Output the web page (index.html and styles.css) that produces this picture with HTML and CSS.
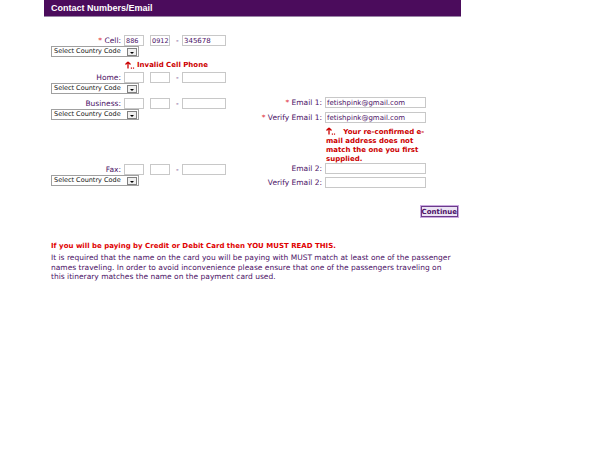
FILE: index.html
```html
<!DOCTYPE html>
<html lang="en">
<head>
    <meta charset="UTF-8">
    <title>Contact Numbers/Email</title>
    <link rel="stylesheet" href="styles.css">
</head>
<body>
    <div class="panel">
        <div class="panel-title">Contact Numbers/Email</div>

        <form class="contact-form">
            <div class="col-left">
                <!-- Cell -->
                <div class="phone-group">
                    <div class="field">
                        <label><span class="req">*</span> Cell:</label>
                        <input type="text" class="in-cc" value="886">
                        <input type="text" class="in-area" value="0912">
                        <span class="dash">-</span>
                        <input type="text" class="in-num" value="345678">
                    </div>
                    <div class="fake-select">Select Country Code<span class="arrow"></span></div>
                </div>
                <div class="error error-phone"><svg class="err-icon" width="10" height="8" viewBox="0 0 10 8"><path d="M3 1 L0.5 3.5 M3 1 L5.5 3.5 M3 1 V7.5" stroke="#c00" stroke-width="1.3" fill="none"/><rect x="5.8" y="6.5" width="1.2" height="1.2" fill="#c00"/><rect x="7.9" y="6.5" width="1.2" height="1.2" fill="#c00"/></svg><span>Invalid Cell Phone</span></div>

                <!-- Home -->
                <div class="phone-group">
                    <div class="field">
                        <label>Home:</label>
                        <input type="text" class="in-cc">
                        <input type="text" class="in-area">
                        <span class="dash">-</span>
                        <input type="text" class="in-num">
                    </div>
                    <div class="fake-select">Select Country Code<span class="arrow"></span></div>
                </div>

                <!-- Business -->
                <div class="phone-group group-business">
                    <div class="field">
                        <label>Business:</label>
                        <input type="text" class="in-cc">
                        <input type="text" class="in-area">
                        <span class="dash">-</span>
                        <input type="text" class="in-num">
                    </div>
                    <div class="fake-select">Select Country Code<span class="arrow"></span></div>
                </div>

                <!-- Fax -->
                <div class="phone-group group-fax">
                    <div class="field">
                        <label>Fax:</label>
                        <input type="text" class="in-cc">
                        <input type="text" class="in-area">
                        <span class="dash">-</span>
                        <input type="text" class="in-num">
                    </div>
                    <div class="fake-select">Select Country Code<span class="arrow"></span></div>
                </div>
            </div>

            <div class="col-right">
                <div class="field email-field">
                    <label><span class="req">*</span> Email 1:</label>
                    <input type="text" class="in-email" value="fetishpink@gmail.com">
                </div>
                <div class="field email-field">
                    <label><span class="req">*</span> Verify Email 1:</label>
                    <input type="text" class="in-email" value="fetishpink@gmail.com">
                </div>
                <div class="error error-email"><svg class="err-icon" width="10" height="8" viewBox="0 0 10 8"><path d="M3 1 L0.5 3.5 M3 1 L5.5 3.5 M3 1 V7.5" stroke="#c00" stroke-width="1.3" fill="none"/><rect x="5.8" y="6.5" width="1.2" height="1.2" fill="#c00"/><rect x="7.9" y="6.5" width="1.2" height="1.2" fill="#c00"/></svg>&nbsp;&nbsp; Your re-confirmed e-mail address does not match the one you first supplied.</div>
                <div class="field email-field">
                    <label>Email 2:</label>
                    <input type="text" class="in-email">
                </div>
                <div class="field email-field">
                    <label>Verify Email 2:</label>
                    <input type="text" class="in-email">
                </div>
            </div>
        </form>

        <div class="actions">
            <button type="button" class="btn-continue">Continue</button>
        </div>

        <div class="notice">
            <p class="notice-title">If you will be paying by Credit or Debit Card then YOU MUST READ THIS.</p>
            <p class="notice-text">It is required that the name on the card you will be paying with MUST match at least one of the passenger names traveling. In order to avoid inconvenience please ensure that one of the passengers traveling on this itinerary matches the name on the payment card used.</p>
        </div>
    </div>
</body>
</html>
```

FILE: styles.css
```css
body {
    margin: 0;
    padding: 0;
    background-color: #fff;
    font-family: "DejaVu Sans", Verdana, sans-serif;
    font-size: 7.5px;
    color: #4b1166;
}

.panel {
    width: 417px;
    margin-left: 44px;
}

.panel-title {
    height: 16px;
    line-height: 16px;
    padding-left: 7px;
    background-color: #4b0c5c;
    border-bottom: 1px solid #9a86a6;
    color: #fff;
    font-family: "Liberation Sans", Arial, sans-serif;
    font-weight: bold;
    font-size: 9px;
}

/* Formulir */
.contact-form {
    display: grid;
    grid-template-columns: 189px 220px;
    align-items: start;
    margin-top: 18px;
    padding-left: 7px;
}

.field {
    display: flex;
    align-items: center;
    height: 11px;
}

.field label {
    width: 70px;
    margin-right: 3px;
    text-align: right;
    white-space: nowrap;
}

.req {
    color: #e0303a;
}

.field input {
    box-sizing: border-box;
    height: 11px;
    margin: 0;
    padding: 0 0 0 1px;
    border: 1px solid #c8c8c8;
    font-family: inherit;
    font-size: 7px;
    color: #4b1166;
    background: #fff;
}

.field .in-cc,
.field .in-area {
    width: 20px;
    margin-right: 6px;
    font-size: 6.5px;
}

.dash {
    width: 6px;
}

.in-num {
    width: 44px;
}

.fake-select {
    position: relative;
    box-sizing: border-box;
    width: 88px;
    height: 11px;
    padding-left: 2px;
    border: 1px solid #a0a0a0;
    font-size: 6.5px;
    line-height: 9px;
    color: #111;
    white-space: nowrap;
    overflow: hidden;
}

.fake-select .arrow {
    position: absolute;
    right: 1px;
    top: 1px;
    width: 8px;
    height: 6px;
    border: 1px solid #808080;
    background: #f0f0f0;
}

.fake-select .arrow::after {
    content: "";
    position: absolute;
    left: 2px;
    top: 3px;
    border-left: 2px solid transparent;
    border-right: 2px solid transparent;
    border-top: 2px solid #000;
}

.error {
    color: #c00;
    font-weight: bold;
    font-size: 7px;
}

.error-phone {
    display: flex;
    align-items: center;
    gap: 2px;
    height: 9px;
    margin: 3px 0 3px 74px;
    white-space: nowrap;
}

.group-business {
    margin-top: 4px;
}

.group-fax {
    margin-top: 44px;
}

.col-right {
    padding-top: 62px;
}

.email-field {
    margin-bottom: 4px;
}

.email-field label {
    width: 82px;
}

.in-email {
    width: 101px;
}

.error-email {
    width: 100px;
    height: 36px;
    margin: 0 0 0 86px;
    line-height: 9px;
}

.error-email .err-icon {
    vertical-align: -1px;
}

.error-email + .email-field {
    margin-bottom: 3px;
}

.actions {
    text-align: right;
    margin-top: 14px;
    padding-right: 3px;
}

.btn-continue {
    height: 11px;
    padding: 0;
    border: 1px solid #6a3a8a;
    background: #ece4f4;
    font-family: inherit;
    font-size: 7px;
    font-weight: bold;
    line-height: 8px;
    color: #4b1166;
    outline: 1px solid #caa8e0;
}

.notice {
    padding-left: 7px;
    margin-top: 25px;
}

.notice-title {
    margin: 0 0 3px;
    color: #e00000;
    font-weight: bold;
    font-size: 7px;
}

.notice-text {
    margin: 0;
    padding-right: 6px;
    line-height: 9.5px;
}
```
